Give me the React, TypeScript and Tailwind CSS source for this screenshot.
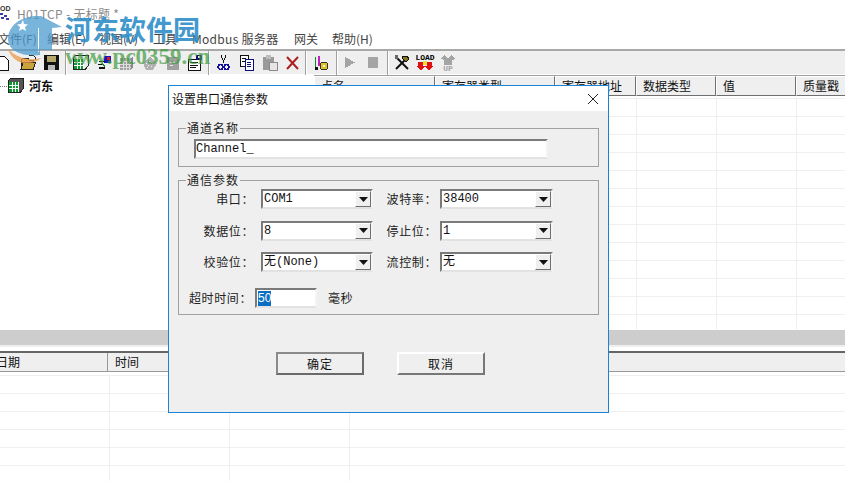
import { ReactNode } from 'react'

const cjk = "font-['Noto_Sans_CJK_SC','Liberation_Sans',sans-serif]"
const mono = "font-['Liberation_Mono','Noto_Sans_CJK_SC',monospace]"

const raised = 'border border-t-white border-l-white border-r-[#6f6f6f] border-b-[#6f6f6f]'
const sunken = 'border-2 border-t-[#7a7a7a] border-l-[#7a7a7a] border-r-[#f4f4f4] border-b-[#e2e2e2]'

function Sep() {
  return <div className="h-[24px] w-[2px] shrink-0 border-l border-l-[#a0a0a0] border-r border-r-white" />
}

function Icon({ w = 18, h = 18, children }: { w?: number; h?: number; children: ReactNode }) {
  return (
    <svg width={w} height={h} viewBox={`0 0 ${w} ${h}`} className="shrink-0" shapeRendering="crispEdges">
      {children}
    </svg>
  )
}

function GridIcon({ dark }: { dark?: boolean }) {
  return (
    <Icon w={17}>
      <path d="M1 4l3-3h12v11l-3 3.500H1z" fill={dark ? '#555' : '#e8e8e8'} stroke="#222" />
      <path d="M2 5h10v10H2z" fill="#0a9a30" />
      <path d="M5 5v10M8 5v10M11 5v10M2 8h10M2 11h10" stroke="#fff" />
    </Icon>
  )
}

function Toolbar() {
  return (
    <div className="flex h-[25px] items-center border-t-2 border-t-[#a8a8a8] bg-[#efefef]">
      <div className="ml-[-8px] w-[20px] shrink-0">
        <Icon w={18}>
          <path d="M1 2h11l4 4v10H1z" fill="#fff" stroke="#111" />
        </Icon>
      </div>
      <div className="ml-[8px] shrink-0">
        <Icon w={17}>
          <path d="M1 6l2-2h5l1 2h4v9H1z" fill="#e6c65c" stroke="#222" />
          <path d="M3 8h13l-3 7H1z" fill="#c9a43a" stroke="#222" />
          <path d="M9 1h4l2 2v3" fill="none" stroke="#222" />
        </Icon>
      </div>
      <div className="ml-[7px] shrink-0">
        <Icon w={15}>
          <path d="M0 1h15v15H0z" fill="#111" />
          <path d="M3 2h9v6H3z" fill="#b5a66a" />
          <path d="M4 11h7v5H4z" fill="#b8b8b8" />
        </Icon>
      </div>
      <div className="ml-[6px]"><Sep /></div>
      <div className="ml-[5px]"><GridIcon /></div>
      <div className="ml-[8px] shrink-0">
        <Icon w={15}>
          <path d="M7 2h7v7H7z" fill="#1414c8" />
          <path d="M10 3h3v3h-3z" fill="#e01818" />
          <path d="M2 7h6v1H2zM1 10h5v1H1zM2 13h6v2H2z" fill="#111" />
          <path d="M5 9l3 4" stroke="#0a8a2a" />
        </Icon>
      </div>
      <div className="ml-[6px] shrink-0">
        <Icon w={16}>
          <path d="M2 4h11v12H2z" fill="#a0a0a0" />
          <path d="M5 4v12M8 4v12M11 4v12M2 7h11M2 10h11M2 13h11" stroke="#dcdcdc" />
          <path d="M13 4l2-2v11l-2 3z" fill="#8a8a8a" />
        </Icon>
      </div>
      <div className="ml-[8px] shrink-0">
        <Icon w={16}>
          <path d="M1 9l7-6 7 6-4 7H4z" fill="#b0b0b0" />
          <path d="M4 9h1v1H4zM7 7h1v1H7zM10 9h1v1h-1zM6 11h1v1H6zM9 12h1v1H9zM5 13h1v1H5z" fill="#efefef" />
        </Icon>
      </div>
      <div className="ml-[7px] shrink-0">
        <Icon w={16}>
          <path d="M2 3h9l3 3v10H2z" fill="#a0a0a0" />
          <path d="M5 8h5v1H5zM5 11h3v1H5z" fill="#e6e6e6" />
        </Icon>
      </div>
      <div className="ml-[6px] shrink-0">
        <Icon w={16}>
          <path d="M1 5h12v11H1z" fill="#fff" stroke="#111" />
          <path d="M3 8h8v1H3zM3 11h8v1H3zM3 13h6v1H3z" fill="#111" />
          <path d="M9 1h6v5H9z" fill="#10107a" />
          <path d="M11 2h2v2h-2z" fill="#e8e8e8" />
        </Icon>
      </div>
      <div className="ml-[5px]"><Sep /></div>
      <div className="ml-[7px] shrink-0">
        <Icon w={13}>
          <path d="M4 1l3 8M9 1L6 9" stroke="#111" />
          <circle cx="3.5" cy="13" r="2.5" fill="none" stroke="#10109a" strokeWidth="1.4" />
          <circle cx="9.5" cy="13" r="2.5" fill="none" stroke="#10109a" strokeWidth="1.4" />
        </Icon>
      </div>
      <div className="ml-[9px] shrink-0">
        <Icon w={15}>
          <path d="M1 1h8v11H1z" fill="#fff" stroke="#111" />
          <path d="M3 4h4M3 7h4" stroke="#111" />
          <path d="M6 5h8v11H6z" fill="#fff" stroke="#10107a" />
          <path d="M8 8h4M8 10h4M8 12h4" stroke="#10107a" />
        </Icon>
      </div>
      <div className="ml-[8px] shrink-0">
        <Icon w={16}>
          <path d="M1 3h11v13H1z" fill="#9a9a9a" />
          <path d="M4 1h5v4H4z" fill="#bdbdbd" />
          <path d="M7 8h8v8H7z" fill="#e6e6e6" stroke="#8a8a8a" />
        </Icon>
      </div>
      <div className="ml-[7px] shrink-0">
        <Icon w={15}>
          <path d="M2 3l11 12M13 3L2 15" stroke="#a82020" strokeWidth="2" shapeRendering="auto" />
        </Icon>
      </div>
      <div className="ml-[5px]"><Sep /></div>
      <div className="ml-[6px] shrink-0">
        <Icon w={16}>
          <path d="M2 3h1v10H2z" fill="#0a8a2a" />
          <path d="M5 2h2v10H5z" fill="#c020c0" />
          <path d="M2 13h3v3H2z" fill="#111" />
          <circle cx="11" cy="12" r="4" fill="#e2c21c" stroke="#333" />
          <circle cx="11" cy="12" r="1.4" fill="#efefef" />
        </Icon>
      </div>
      <div className="ml-[7px]"><Sep /></div>
      <div className="ml-[7px] shrink-0">
        <Icon w={11}>
          <path d="M0 3l10 5.500L0 14z" fill="#a4a4a4" />
        </Icon>
      </div>
      <div className="ml-[12px] shrink-0">
        <Icon w={11}>
          <path d="M0 3h10v11H0z" fill="#a4a4a4" />
        </Icon>
      </div>
      <div className="ml-[8px]"><Sep /></div>
      <div className="ml-[5px] shrink-0">
        <Icon w={16}>
          <path d="M2 15L12 5" stroke="#111" strokeWidth="2" shapeRendering="auto" />
          <path d="M8 2h5l2 3-3 3-4-4z" fill="#8a7420" stroke="#111" />
          <path d="M3 4l11 11" stroke="#111" strokeWidth="2" shapeRendering="auto" />
          <path d="M1 1h3v4H1z" fill="#666" />
        </Icon>
      </div>
      <div className="ml-[7px] flex h-[18px] w-[16px] shrink-0 flex-col items-center">
        <span className={`${mono} text-[8px] leading-[7px] font-bold text-black`}>LOAD</span>
        <Icon w={16} h={11}>
          <path d="M1 1h5v4h2l-4 5-4-5h1zM10 1h5v4h1l-4 5-4-5h2z" fill="#e01010" />
          <path d="M6 0h4v4H6z" fill="#f2e23a" />
        </Icon>
      </div>
      <div className="ml-[7px] flex h-[18px] w-[16px] shrink-0 flex-col items-center">
        <Icon w={16} h={11}>
          <path d="M1 5l3-4 4 3 4-3 3 4-3 1v5H4V6z" fill="#a4a4a4" />
        </Icon>
        <span className={`${mono} text-[8px] leading-[7px] font-bold text-[#a4a4a4]`}>UP</span>
      </div>
    </div>
  )
}

function HeaderCell({ w, text }: { w: number; text: string }) {
  return (
    <div
      className={`${raised} flex h-full shrink-0 items-center bg-[#efefef] pl-[6px] text-[12px] text-[#111] ${cjk}`}
      style={{ width: w }}
    >
      {text}
    </div>
  )
}

function Rows({ count, cols }: { count: number; cols: number[] }) {
  return (
    <div className="flex flex-col border-t border-t-[#efefef]">
      {Array.from({ length: count }).map((_, i) => (
        <div key={i} className="flex h-[18px] border-b border-b-[#efefef]">
          {cols.map((w, j) => (
            <div key={j} className="shrink-0 border-r border-r-[#efefef]" style={{ width: w }} />
          ))}
        </div>
      ))}
    </div>
  )
}

function Select({ value, width }: { value: string; width: string }) {
  return (
    <div className={`${sunken} ${width} flex h-[20px] items-stretch bg-white`}>
      <span className={`${mono} flex-1 pl-[1px] text-[12px] leading-[16px] text-[#111]`}>{value}</span>
      <div className={`${raised} flex w-[16px] items-center justify-center bg-[#efefef]`}>
        <svg width="9" height="5" viewBox="0 0 9 5">
          <path d="M0 0h9L4.500 5z" fill="#111" />
        </svg>
      </div>
    </div>
  )
}

function Field({ label, value, labelW, width }: { label: string; value: string; labelW: string; width: string }) {
  return (
    <div className="flex items-center">
      <span className={`${labelW} text-right text-[12px] tracking-[0.6px] text-[#222] ${cjk}`}>{label}</span>
      <Select value={value} width={width} />
    </div>
  )
}

function Group({ title, className, children }: { title: string; className: string; children: ReactNode }) {
  return (
    <div className={`relative rounded-none border border-[#a0a0a0] ${className}`}>
      <span className={`absolute top-[-8px] left-[7px] bg-[#efefef] px-[1px] text-[12px] leading-[14px] tracking-[1px] text-[#222] ${cjk}`}>
        {title}
      </span>
      {children}
    </div>
  )
}

function Dialog() {
  return (
    <div className="absolute top-[85px] left-[168px] flex h-[328px] w-[441px] flex-col border border-[#1883d7] bg-[#efefef]">
      <div className="flex h-[25px] items-center justify-between bg-white pr-[9px] pl-[3px]">
        <span className={`text-[12px] text-[#111] ${cjk}`}>设置串口通信参数</span>
        <svg width="12" height="12" viewBox="0 0 12 12">
          <path d="M1 1l10 10M11 1L1 11" stroke="#222" strokeWidth="1" fill="none" />
        </svg>
      </div>
      <div className="flex flex-col px-[9px] pt-[17px]">
        <Group title="通道名称" className="h-[39px]">
          <div className="pt-[10px] pl-[15px]">
            <div className={`${sunken} flex h-[20px] w-[354px] items-center bg-white ${mono} text-[12px] text-[#111]`}>
              Channel_
            </div>
          </div>
        </Group>
        <Group title="通信参数" className="mt-[13px] h-[135px]">
          <div className="grid grid-cols-[195px_1fr] gap-y-[11.5px] pt-[8px]">
            <Field label="串口：" value="COM1" labelW="w-[82px] pr-[7px]" width="w-[112px]" />
            <Field label="波特率：" value="38400" labelW="w-[66px] pr-[3px]" width="w-[113px]" />
            <Field label="数据位：" value="8" labelW="w-[82px] pr-[7px]" width="w-[112px]" />
            <Field label="停止位：" value="1" labelW="w-[66px] pr-[3px]" width="w-[113px]" />
            <Field label="校验位：" value="无(None)" labelW="w-[82px] pr-[7px]" width="w-[112px]" />
            <Field label="流控制：" value="无" labelW="w-[66px] pr-[3px]" width="w-[113px]" />
          </div>
          <div className="mt-[16px] flex items-center pl-[10px]">
            <span className={`w-[66px] text-[12px] tracking-[0.6px] text-[#222] ${cjk}`}>超时时间：</span>
            <div className={`${sunken} flex h-[20px] w-[62px] items-center bg-white pl-[1px]`}>
              <span className="bg-[#0a6fc4] font-['Liberation_Sans',sans-serif] text-[12px] leading-[15px] text-white">50</span>
            </div>
            <span className={`ml-[11px] text-[12px] tracking-[0.6px] text-[#222] ${cjk}`}>毫秒</span>
          </div>
        </Group>
        <div className="mt-[37px] flex gap-[33px] pl-[98px]">
          <button className={`h-[23px] w-[88px] border-2 border-t-[#8a8a8a] border-l-[#8a8a8a] border-r-[#6a6a6a] border-b-[#6a6a6a] bg-[#efefef] text-[12px] tracking-[1px] text-[#111] ${cjk}`}>
            确定
          </button>
          <button className={`h-[23px] w-[88px] border-2 border-t-white border-l-white border-r-[#777] border-b-[#777] bg-[#efefef] text-[12px] tracking-[1px] text-[#111] ${cjk}`}>
            取消
          </button>
        </div>
      </div>
    </div>
  )
}

function Watermark() {
  return (
    <div className="pointer-events-none absolute top-[13px] left-0 flex">
      <svg width="66" height="52" viewBox="0 0 66 52" className="shrink-0 opacity-75">
        <path
          fillRule="evenodd"
          d="M8 24C10 10 24 2 41 3l21 11-10 1v22H40v5C22 44 7 38 8 24zM39 15v24h-1V15zM23 7l-2 4-4 .5 3 2.500-1 4 3.500-2 3.500 2-1-4 3-2.500-4-.5z"
          fill="#4d9bd0"
        />
        <path d="M40 15h11v22H40z" fill="#4d9bd0" opacity="0.12" />
        <path d="M8 36c9 9 20 12 34 9-8 5-14 6-20 5-6-2-12-7-14-14z" fill="#ea9a4a" />
      </svg>
      <div className="ml-[-1px] flex flex-col">
        <span className={`${cjk} mt-[-1px] text-[27px] leading-[34px] font-bold text-[#2f8fc9] opacity-90`}>河东软件园</span>
        <span className="mt-[2px] font-['Liberation_Serif',serif] text-[23px] leading-[18px] font-bold text-[#3f9a3f] opacity-70">
          <span className="tracking-[-4px]">www</span>
          <span className="ml-[4px]">.pc0359.cn</span>
        </span>
      </div>
    </div>
  )
}

const menus = [
  { name: '文件(F)', w: 'w-[49px]' },
  { name: '编辑(E)', w: 'w-[52px]' },
  { name: '视图(V)', w: 'w-[54px]' },
  { name: '工具', w: 'w-[39px]' },
  { name: 'Modbus 服务器', w: 'w-[102px] tracking-[0.3px]' },
  { name: '网关', w: 'w-[38px]' },
  { name: '帮助(H)', w: 'w-[42px]' },
]

export default function App() {
  return (
    <div className="relative h-[481px] w-[845px] overflow-hidden bg-white">
      <div className="flex h-[30px] items-start bg-white">
        <div className="mt-[5px] flex w-[10px] shrink-0 flex-col">
          <span className="font-['Liberation_Sans',sans-serif] text-[7px] leading-[7px] font-bold text-[#333]">OD</span>
          <svg width="9" height="7" viewBox="0 0 9 7" className="mt-[1px]">
            <path d="M0 0h3v2H0zM4 2h3v2H4zM1 4h3v2H1zM6 5h3v2H6z" fill="#3a3aa8" />
          </svg>
        </div>
        <span className={`${cjk} mt-[5px] ml-[7px] text-[12px] tracking-[0.3px] text-[#8a8a8a]`}>H01TCP - 无标题 *</span>
      </div>
      <div className={`flex h-[19px] items-center pb-[2px] text-[12px] text-[#444] ${cjk}`}>
        <div className="ml-[-2px] flex">
          {menus.map((m) => (
            <span key={m.name} className={`${m.w} shrink-0 whitespace-nowrap`}>{m.name}</span>
          ))}
        </div>
      </div>
      <Toolbar />
      <div className="flex h-[256px]">
        <div className="w-[314px] shrink-0 pt-[3px]">
          <div className="flex items-center">
            <span className="w-[7px] border-t border-dotted border-t-[#777]" />
            <div><GridIcon dark /></div>
            <span className={`ml-[5px] text-[12px] font-bold text-[#111] ${cjk}`}>河东</span>
          </div>
        </div>
        <div className="flex flex-1 flex-col overflow-hidden pt-[1px]">
          <div className="flex h-[21px] shrink-0 border-t border-t-[#a0a0a0]">
            <HeaderCell w={121} text="点名" />
            <HeaderCell w={120} text="寄存器类型" />
            <HeaderCell w={81} text="寄存器地址" />
            <HeaderCell w={80} text="数据类型" />
            <HeaderCell w={80} text="值" />
            <HeaderCell w={50} text="质量戳" />
          </div>
          <div className="mt-[2px]">
            <Rows count={13} cols={[122, 120, 81, 80, 80]} />
          </div>
        </div>
      </div>
      <div className="h-[15px] bg-[#cdcdcd]" />
      <div className="h-[2px] bg-[#efefef]" />
      <div className="h-[4px] bg-white" />
      <div className="flex h-[21px] border-t-2 border-t-[#666] border-b border-b-[#999] bg-[#efefef]">
        <div className={`flex w-[108px] shrink-0 items-center border-r border-r-[#999] text-[12px] text-[#111] ${cjk}`}>
          <span className="ml-[-4px]">日期</span>
        </div>
        <div className={`flex items-center pl-[7px] text-[12px] text-[#111] ${cjk}`}>时间</div>
      </div>
      <div className="mt-[3px]">
        <Rows count={6} cols={[110, 120, 120]} />
      </div>
      <Watermark />
      <Dialog />
    </div>
  )
}
